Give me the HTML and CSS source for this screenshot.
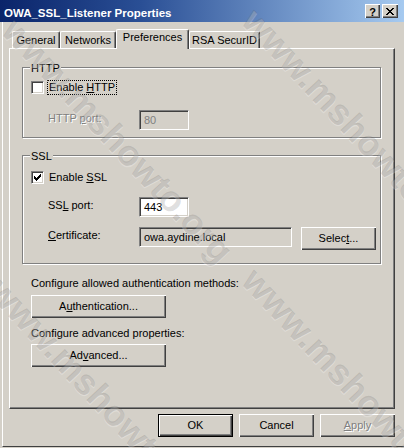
FILE: index.html
```html
<!DOCTYPE html>
<html>
<head>
<meta charset="utf-8">
<title>OWA_SSL_Listener Properties</title>
<link rel="stylesheet" href="styles.css">
</head>
<body>
<div class="window">
  <div class="titlebar">
    <span class="title">OWA_SSL_Listener Properties</span>
    <div class="caption">
      <span class="cbtn help">?</span>
      <span class="cbtn close"><svg width="8" height="7" viewBox="0 0 8 7" shape-rendering="crispEdges"><path d="M0 0h2v1h-2zM6 0h2v1h-2zM1 1h2v1h-2zM5 1h2v1h-2zM2 2h4v1h-4zM3 3h2v1h-2zM2 4h4v1h-4zM1 5h2v1h-2zM5 5h2v1h-2zM0 6h2v1h-2zM6 6h2v1h-2z" fill="#000"/></svg></span>
    </div>
  </div>
  <div class="client">
    <div class="tabs">
      <div class="tab tab-general">General</div>
      <div class="tab tab-networks">Networks</div>
      <div class="tab tab-prefs active">Preferences</div>
      <div class="tab tab-rsa">RSA SecurID</div>
    </div>
    <div class="panel">
      <div class="group g-http">
        <span class="legend">HTTP</span>
        <div class="check-row">
          <span class="checkbox"></span>
          <span class="focus">Enable <u>H</u>TTP</span>
        </div>
        <div class="field-row first">
          <span class="label disabled">HTTP <u>p</u>ort:</span>
          <span class="textbox disabled port">80</span>
        </div>
      </div>
      <div class="group g-ssl">
        <span class="legend">SSL</span>
        <div class="check-row">
          <span class="checkbox checked"><svg width="7" height="7" viewBox="0 0 7 7" shape-rendering="crispEdges"><path d="M6 0h1v3h-1zM5 1h1v3h-1zM4 2h1v3h-1zM3 3h1v3h-1zM2 4h1v3h-1zM1 3h1v3h-1zM0 2h1v3h-1z" fill="#000"/></svg></span>
          <span class="check-label">Enable <u>S</u>SL</span>
        </div>
        <div class="field-row ssl-port">
          <span class="label">SS<u>L</u> port:</span>
          <span class="textbox port">443</span>
        </div>
        <div class="field-row cert">
          <span class="label"><u>C</u>ertificate:</span>
          <span class="textbox disabled certbox">owa.aydine.local</span>
          <span class="button select">Selec<u>t</u>...</span>
        </div>
      </div>
      <p class="note note-auth">Configure allowed authentication methods:</p>
      <span class="button wide btn-auth">A<u>u</u>thentication...</span>
      <p class="note note-adv">Configure advanced properties:</p>
      <span class="button wide btn-adv">Ad<u>v</u>anced...</span>
    </div>
    <div class="actions">
      <span class="button default">OK</span>
      <span class="button">Cancel</span>
      <span class="button disabled-btn"><u>A</u>pply</span>
    </div>
  </div>
</div>
<div class="watermark">
  <span class="wm wm1">www.mshowto.org</span>
  <span class="wm wm2">www.mshowto.org</span>
  <span class="wm wm3">www.mshowto.org</span>
  <span class="wm wm4">www.mshowto.org</span>
</div>
</body>
</html>
```
FILE: styles.css
```css
* { box-sizing: border-box; }
html, body { margin: 0; padding: 0; }
body {
  width: 404px;
  height: 448px;
  overflow: hidden;
  position: relative;
  background: #d4d0c8;
  font-family: "Liberation Sans", Arial, sans-serif;
  font-size: 11px;
  line-height: 13px;
  color: #000;
}
u { text-decoration: underline; text-underline-offset: 1px; }

.window {
  height: 448px;
  display: flex;
  flex-direction: column;
}

/* title bar */
.titlebar {
  flex: none;
  height: 22px;
  display: flex;
  align-items: flex-start;
  justify-content: space-between;
  padding: 4px 6px 0 4px;
  background: linear-gradient(to right, #0a246a 0%, #2a4f95 35%, #a6caf0 100%);
}
.title {
  margin-top: 2px;
  color: #fff;
  font-weight: bold;
  font-size: 11.5px;
  line-height: 14px;
}
.caption { display: flex; gap: 2px; }
.cbtn {
  width: 16px;
  height: 14px;
  display: flex;
  align-items: center;
  justify-content: center;
  background: #d4d0c8;
  box-shadow: inset 1px 1px #fff, inset -1px -1px #404040, inset -2px -2px #808080;
  font-weight: bold;
  font-size: 11px;
  line-height: 12px;
}
.cbtn.help { width: 15px; padding-top: 1px; }
.cbtn.close svg { margin-top: 0; }

/* client */
.client {
  flex: 1;
  margin: 0 0 1px 2px;
  border-left: 1px solid #fff;
  border-bottom: 1px solid #404040;
  padding: 7px 9px 0 6px;
  display: flex;
  flex-direction: column;
}

/* tabs */
.tabs {
  height: 19px;
  margin-left: 3px;
  display: flex;
  align-items: flex-end;
  position: relative;
  z-index: 2;
}
.tab {
  height: 17px;
  padding-top: 2px;
  text-align: center;
  border-top: 1px solid #fff;
  border-left: 1px solid #fff;
  border-right: 1px solid #404040;
  border-radius: 2px 2px 0 0;
  box-shadow: inset -1px 0 #808080;
  background: #d4d0c8;
}
.tab-general { width: 48px; }
.tab-networks { width: 56px; }
.tab-prefs { width: 73px; }
.tab-rsa { width: 71px; }
.tab.active {
  height: 20px;
  margin-bottom: -1px;
  padding-top: 1px;
}

/* panel */
.panel {
  flex: none;
  width: 386px;
  height: 361px;
  border-top: 1px solid #fff;
  border-left: 1px solid #fff;
  border-right: 1px solid #404040;
  border-bottom: 1px solid #404040;
  box-shadow: inset -1px -1px #808080;
  padding: 18px 0 0 12px;
  display: flex;
  flex-direction: column;
  align-items: flex-start;
}

/* group boxes */
.group {
  position: relative;
  width: 359px;
  border: 1px solid #808080;
  box-shadow: inset 1px 1px #fff, 1px 1px 0 #fff;
  padding-left: 8px;
}
.legend {
  position: absolute;
  top: -6px;
  left: 7px;
  padding: 0 1px;
  background: #d4d0c8;
}
.g-http { height: 71px; padding-top: 12px; }
.g-ssl { height: 109px; margin-top: 17px; padding-top: 14px; }

.check-row {
  height: 15px;
  display: flex;
  align-items: center;
}
.checkbox {
  width: 13px;
  height: 13px;
  flex: none;
  display: flex;
  align-items: center;
  justify-content: center;
  background: #fff;
  border: 1px solid;
  border-color: #808080 #fff #fff #808080;
  box-shadow: inset 1px 1px #404040, inset -1px -1px #d4d0c8;
}
.focus {
  margin-left: 3px;
  padding: 0 1px;
  border: 1px dotted #000;
}
.check-label { margin-left: 5px; }

.field-row {
  display: flex;
  align-items: flex-start;
  padding-left: 17px;
}
.g-http .field-row.first { margin-top: 15px; }
.ssl-port { margin-top: 12px; }
.cert { margin-top: 10px; }
.label {
  width: 91px;
  flex: none;
  padding-top: 2px;
}
.disabled { color: #808080; }
.label.disabled { text-shadow: 1px 1px 0 #fff; }

.textbox {
  height: 20px;
  display: flex;
  align-items: center;
  padding-left: 4px;
  background: #fff;
  border: 1px solid;
  border-color: #808080 #fff #fff #808080;
  box-shadow: inset 1px 1px #404040, inset -1px -1px #d4d0c8;
  white-space: nowrap;
}
.textbox.disabled { background: #d4d0c8; color: #808080; }
.textbox.certbox { color: #000; }
.port { width: 50px; }
.certbox { width: 153px; }

/* buttons */
.button {
  width: 75px;
  height: 23px;
  flex: none;
  display: flex;
  align-items: center;
  justify-content: center;
  background: #d4d0c8;
  box-shadow: inset 1px 1px #fff, inset -1px -1px #404040, inset -2px -2px #808080;
}
.button.select { margin-left: 9px; }
.button.wide { width: 135px; margin-left: 9px; }
.button.default {
  border: 1px solid #000;
  box-shadow: inset 1px 1px #fff, inset -1px -1px #404040, inset -2px -2px #808080;
}
.disabled-btn { color: #808080; text-shadow: 1px 1px 0 #fff; }

.note { margin: 0 0 0 9px; }
.note-auth { margin-top: 13px; }
.btn-auth { margin-top: 5px; }
.note-adv { margin-top: 9px; }
.btn-adv { margin-top: 4px; }

.actions {
  margin-top: 5px;
  display: flex;
  justify-content: flex-end;
  gap: 6px;
}

/* watermark overlay */
.watermark {
  position: absolute;
  inset: 0;
  overflow: hidden;
  pointer-events: none;
  z-index: 10;
}
.wm {
  position: absolute;
  font-family: "Liberation Sans", Arial, sans-serif;
  font-weight: bold;
  font-size: 36px;
  line-height: 36px;
  white-space: nowrap;
  color: rgba(90, 90, 90, 0.2);
  text-shadow: 1px 1px 0 rgba(255, 255, 255, 0.25);
  transform-origin: 0 0;
  transform: rotate(47deg);
}
.wm1 { left: 22px; top: 12px; }
.wm2 { left: 262px; top: 2px; }
.wm3 { left: 8px; top: 272px; }
.wm4 { left: 262px; top: 262px; }
```
